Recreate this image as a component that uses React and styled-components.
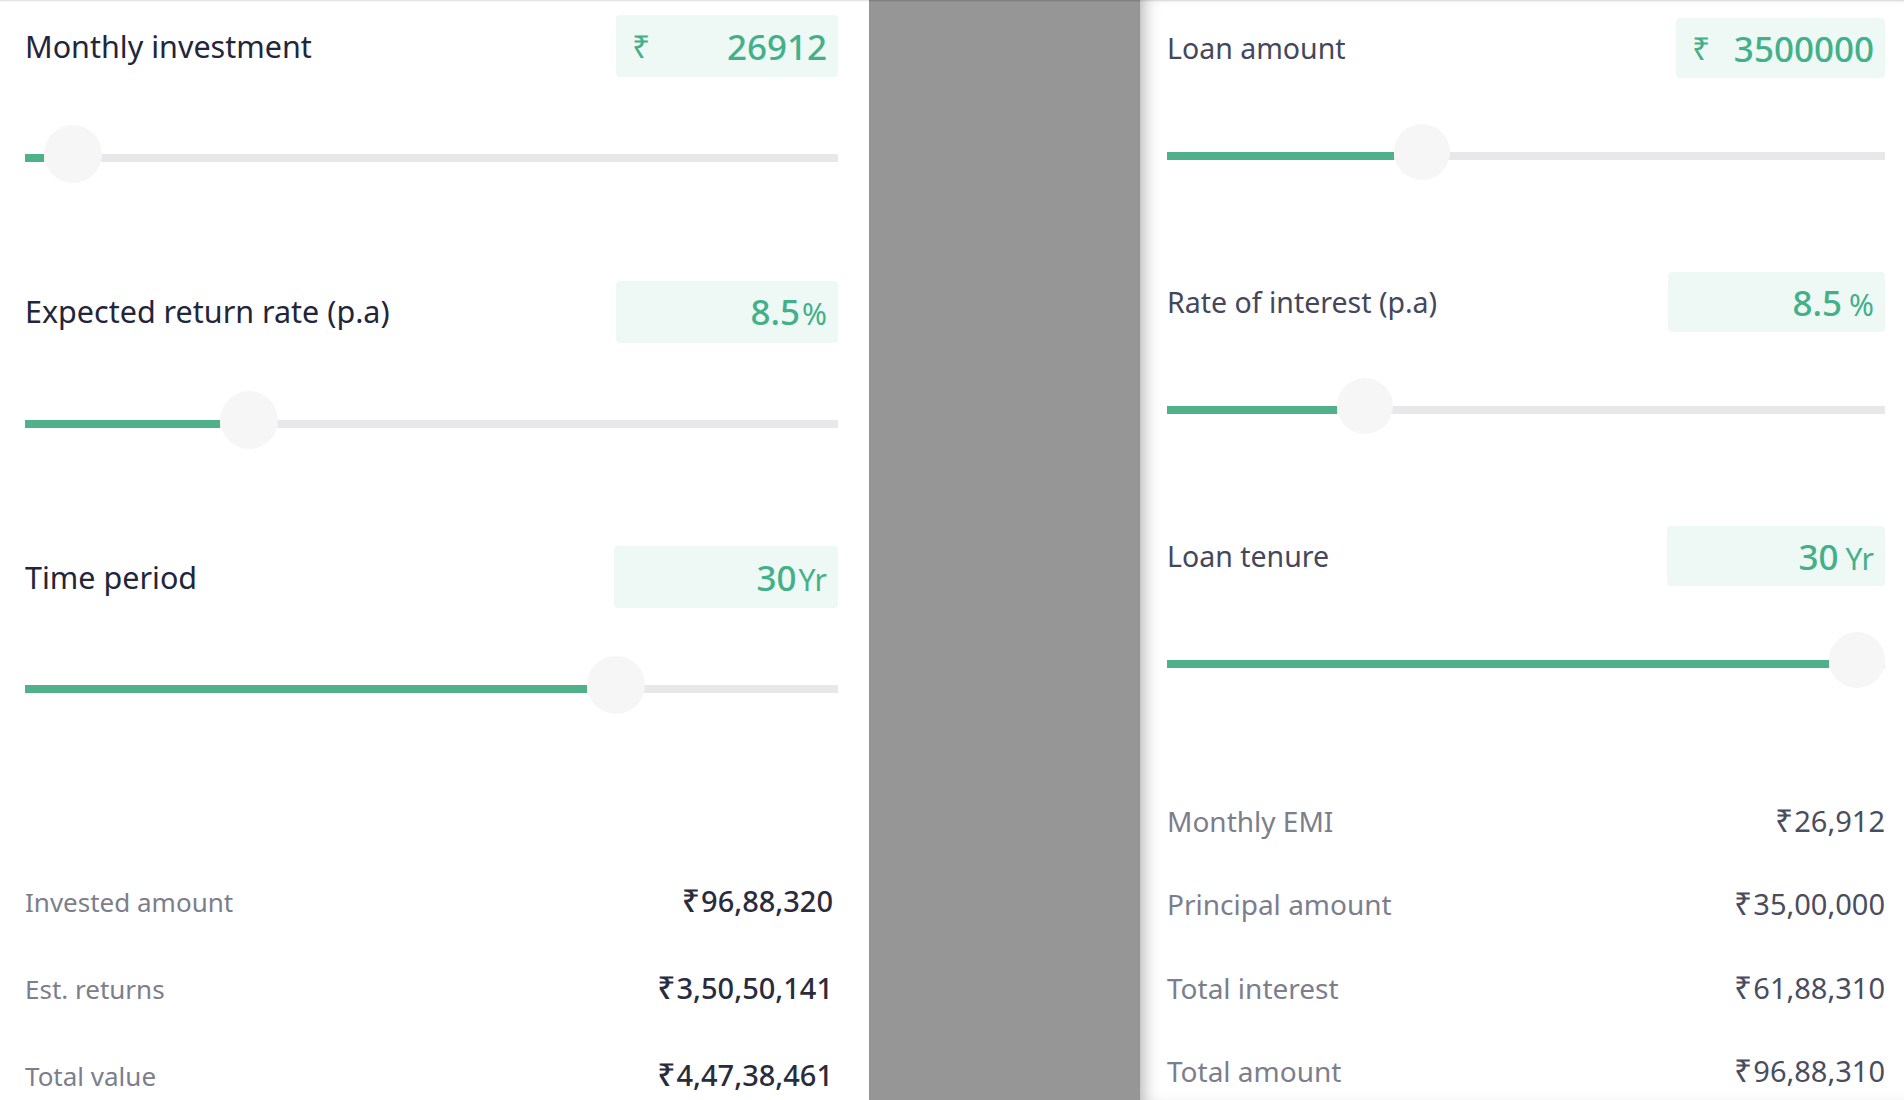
import React from 'react';
import styled, { createGlobalStyle } from 'styled-components';

const GlobalStyle = createGlobalStyle`
    html, body {
        margin: 0;
        padding: 0;
        background: #ffffff;
        font-family: 'Noto Sans', 'Liberation Sans', sans-serif;
        overflow: hidden;
    }
`;

const sipFields = [
    { label: 'Monthly investment', prefix: true, value: '26912', width: 222, pos: 0.025 },
    { label: 'Expected return rate (p.a)', value: '8.5', unit: '%', width: 222, pos: 0.258 },
    { label: 'Time period', value: '30', unit: 'Yr', width: 224, pos: 0.744 },
];

const sipResults = [
    { label: 'Invested amount', value: '96,88,320' },
    { label: 'Est. returns', value: '3,50,50,141' },
    { label: 'Total value', value: '4,47,38,461' },
];

const emiFields = [
    { label: 'Loan amount', prefix: true, value: '3500000', width: 209, pos: 0.343 },
    { label: 'Rate of interest (p.a)', value: '8.5', unit: '%', spaced: true, width: 217, pos: 0.257 },
    { label: 'Loan tenure', value: '30', unit: 'Yr', spaced: true, width: 218, pos: 1 },
];

const emiResults = [
    { label: 'Monthly EMI', value: '26,912' },
    { label: 'Principal amount', value: '35,00,000' },
    { label: 'Total interest', value: '61,88,310' },
    { label: 'Total amount', value: '96,88,310' },
];

const Field = ({ field, variant }) => {
    const thumb = variant === 'sip' ? 58 : 56;
    const offset = `calc(${field.pos} * (100% - ${thumb}px))`;
    return (
        <FieldWrap $variant={variant}>
            <Header $h={variant === 'sip' ? 62 : 60}>
                <Label $variant={variant}>{field.label}</Label>
                <ValueBox $w={field.width} $prefixed={field.prefix}>
                    {field.prefix && <Prefix>₹</Prefix>}
                    <Amount>
                        {field.value}
                        {field.unit && <Unit $spaced={field.spaced}>{field.unit}</Unit>}
                    </Amount>
                </ValueBox>
            </Header>
            <Slider $size={thumb} $top={variant === 'sip' ? 48 : 46}>
                <Track $size={thumb} />
                <Fill $size={thumb} style={{ width: offset }} />
                <Thumb $size={thumb} style={{ left: offset }} />
            </Slider>
        </FieldWrap>
    );
};

const Results = ({ rows, variant }) => (
    <ResultList $variant={variant}>
        {rows.map((row) => (
            <ResultRow key={row.label} $variant={variant}>
                <ResultLabel $variant={variant}>{row.label}</ResultLabel>
                <ResultValue $variant={variant}>
                    <Rupee>₹</Rupee>
                    {row.value}
                </ResultValue>
            </ResultRow>
        ))}
    </ResultList>
);

const App = () => (
    <>
        <GlobalStyle />
        <Page>
            <SipPanel>
                {sipFields.map((f) => (
                    <Field key={f.label} field={f} variant="sip" />
                ))}
                <Results rows={sipResults} variant="sip" />
            </SipPanel>
            <Backdrop />
            <EmiPanel>
                {emiFields.map((f) => (
                    <Field key={f.label} field={f} variant="emi" />
                ))}
                <Results rows={emiResults} variant="emi" />
            </EmiPanel>
        </Page>
    </>
);

export default App;

const Page = styled.div`
    display: flex;
    width: 1904px;
    height: 1100px;
    overflow: hidden;
`;

const Panel = styled.section`
    box-sizing: border-box;
    height: 100%;
    display: flex;
    flex-direction: column;
    background: #ffffff;
`;

const SipPanel = styled(Panel)`
    width: 869px;
    flex-shrink: 0;
    padding: 15px 31px 0 25px;
    box-shadow: inset 0 2px 2px -1px rgba(0, 0, 0, 0.14);
`;

const Backdrop = styled.div`
    width: 271px;
    flex-shrink: 0;
    background: #969696;
    box-shadow: inset 0 2px 2px -1px rgba(0, 0, 0, 0.2);
`;

const EmiPanel = styled(Panel)`
    flex: 1;
    padding: 18px 19px 0 27px;
    box-shadow: inset 0 2px 2px -1px rgba(0, 0, 0, 0.14),
        inset 14px 0 18px -12px rgba(0, 0, 0, 0.35);
`;

const FieldWrap = styled.div`
    margin-bottom: ${(p) => (p.$variant === 'sip' ? '97.5px' : '92px')};

    &:nth-child(3) {
        margin-bottom: 0;
    }
`;

const Header = styled.div`
    display: flex;
    justify-content: space-between;
    align-items: center;
    height: ${(p) => p.$h}px;
`;

const Label = styled.div`
    font-size: ${(p) => (p.$variant === 'sip' ? '30.5px' : '28.5px')};
    color: ${(p) => (p.$variant === 'sip' ? '#23253a' : '#44475b')};
    line-height: 1;
`;

const ValueBox = styled.div`
    box-sizing: border-box;
    width: ${(p) => p.$w}px;
    height: 100%;
    display: flex;
    align-items: center;
    justify-content: ${(p) => (p.$prefixed ? 'space-between' : 'flex-end')};
    padding: 0 11px 0 16px;
    background: #eef8f4;
    border-radius: 4px;
    color: #44b089;
`;

const Prefix = styled.span`
    font-size: 32px;
    line-height: 1;
`;

const Amount = styled.span`
    font-size: 35px;
    font-weight: 500;
    line-height: 1;
    white-space: nowrap;
`;

const Unit = styled.span`
    font-size: 30px;
    font-weight: 400;
    margin-left: ${(p) => (p.$spaced ? '7px' : '2px')};
`;

const Slider = styled.div`
    position: relative;
    height: ${(p) => p.$size}px;
    margin-top: ${(p) => p.$top}px;
`;

const Track = styled.div`
    position: absolute;
    left: 0;
    right: 0;
    top: ${(p) => p.$size / 2}px;
    height: 8px;
    background: #e8e8ea;
`;

const Fill = styled.div`
    position: absolute;
    left: 0;
    top: ${(p) => p.$size / 2}px;
    height: 8px;
    background: #50b08a;
`;

const Thumb = styled.div`
    position: absolute;
    top: 0;
    width: ${(p) => p.$size}px;
    height: ${(p) => p.$size}px;
    border-radius: 50%;
    background: #f6f6f6;
`;

const ResultList = styled.div`
    margin-top: ${(p) => (p.$variant === 'sip' ? '170px' : '116px')};
`;

const ResultRow = styled.div`
    display: flex;
    justify-content: space-between;
    align-items: baseline;
    height: ${(p) => (p.$variant === 'sip' ? '87px' : '83.3px')};
    padding-right: ${(p) => (p.$variant === 'sip' ? '5px' : '0')};
`;

const ResultLabel = styled.span`
    font-size: ${(p) => (p.$variant === 'sip' ? '26px' : '28px')};
    color: #7c7e8c;
    line-height: 1.2;
`;

const ResultValue = styled.span`
    font-size: 29px;
    font-weight: ${(p) => (p.$variant === 'sip' ? 500 : 400)};
    color: ${(p) => (p.$variant === 'sip' ? '#2a2c3d' : '#4a4d5e')};
    line-height: 1.2;
    white-space: nowrap;
`;

const Rupee = styled.span`
    font-size: 1.1em;
    line-height: 1;
    margin-right: 1px;
`;
